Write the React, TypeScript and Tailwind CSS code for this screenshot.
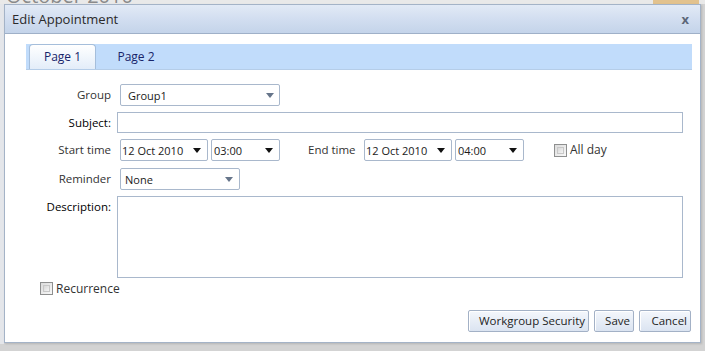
import React from "react";

const font = { fontFamily: '"Open Sans", "Noto Sans", sans-serif' };

function Arrow({ dark }: { dark?: boolean }) {
  return (
    <svg width="8" height="5" viewBox="0 0 8 5" className="shrink-0">
      <path d="M0 0 H8 L4 5 Z" fill={dark ? "#111" : "#66758a"} />
    </svg>
  );
}

function Select({
  value,
  width,
  dark,
  padLeft,
  arrowRight,
}: {
  value: string;
  width: string;
  dark?: boolean;
  padLeft: string;
  arrowRight: string;
}) {
  return (
    <div
      className={`${width} h-[22px] flex items-center justify-between border border-[#a9b8cc] rounded-[2px] bg-white text-[11px] text-[#1a1a1a] ${padLeft} ${arrowRight}`}
    >
      <span className="leading-none">{value}</span>
      <Arrow dark={dark} />
    </div>
  );
}

function Checkbox() {
  return (
    <div className="w-[13px] h-[13px] shrink-0 border border-[#8e8f8f] bg-gradient-to-br from-[#dcdcdc] to-[#f8f8f8] p-[2px]">
      <div className="w-full h-full border border-[#c8c8c8] bg-gradient-to-br from-[#d8d8d8] to-[#f4f4f4]" />
    </div>
  );
}

function Button({ children, width }: { children: React.ReactNode; width: string }) {
  return (
    <div
      className={`${width} h-[22px] flex items-center justify-end pr-[3px] border border-[#a3b1c6] rounded-[2px] bg-gradient-to-b from-[#f4f7fc] to-[#dbe4f1] text-[11.5px] text-[#1e1e1e] shadow-[inset_1px_1px_0_#ffffff]`}
    >
      {children}
    </div>
  );
}

export default function App() {
  return (
    <div
      className="relative w-[705px] h-[351px] overflow-hidden bg-[#d3d3d3] pt-[4px] pl-[4px]"
      style={font}
    >
      {/* calendar behind the dialog */}
      <div className="absolute left-0 top-0 w-[705px] h-[4px] bg-[#e9e9e9]" />
      <span className="absolute left-[6px] top-[-14px] text-[20px] text-[#8a8a8a] leading-none">
        October 2010
      </span>
      <div className="absolute right-[6px] top-0 w-[46px] h-[4px] bg-[#e2c28e]" />
      <div className="absolute left-0 top-[4px] w-[4px] h-[340px] bg-[#e4e6ea]" />

      <div className="relative w-[697px] h-[339px] border border-[#a4b3c7] bg-white flex flex-col shadow-[1px_1px_2px_rgba(0,0,0,0.15)]">
        {/* title bar */}
        <div className="h-[29px] shrink-0 flex items-center justify-between pl-[7px] pr-[11px] border-b border-[#9fb0c8] bg-gradient-to-b from-[#e2eaf6] via-[#d2def0] to-[#c4d4ea]">
          <span className="text-[13px] text-[#2a2a2a] leading-none">Edit Appointment</span>
          <span className="text-[13px] font-bold text-[#5d6778] leading-none">x</span>
        </div>

        {/* tabs */}
        <div className="mt-[10px] ml-[21px] mr-[8px] h-[26px] flex items-end pl-[3px] bg-[#c1dcfb] border-b border-[#b5cde8]">
          <div className="w-[67px] h-[25px] flex items-center justify-center rounded-t-[4px] border border-b-0 border-[#a5bedb] bg-gradient-to-b from-[#ffffff] to-[#e3edf9] text-[12px] text-[#17246a]">
            Page 1
          </div>
          <div className="w-[80px] h-[25px] flex items-center justify-center text-[12px] text-[#17246a]">
            Page 2
          </div>
        </div>

        {/* form */}
        <div className="flex flex-col text-[11.5px] text-[#333] leading-none">
          <div className="mt-[14px] h-[22px] flex items-center">
            <div className="w-[106px] text-right">Group</div>
            <div className="ml-[9px]">
              <Select value="Group1" width="w-[160px]" padLeft="pl-[7px]" arrowRight="pr-[5px]" />
            </div>
          </div>

          <div className="mt-[6px] h-[21px] flex items-center">
            <div className="w-[106px] text-right text-black font-medium">Subject:</div>
            <div className="ml-[6px] w-[566px] h-[21px] border border-[#a9b8cc] bg-white" />
          </div>

          <div className="mt-[6px] h-[22px] flex items-center">
            <div className="w-[106px] text-right">Start time</div>
            <div className="ml-[9px] flex gap-[3px]">
              <Select value="12 Oct 2010" width="w-[88px]" dark padLeft="pl-[1px]" arrowRight="pr-[6px]" />
              <Select value="03:00" width="w-[69px]" dark padLeft="pl-[2px]" arrowRight="pr-[6px]" />
            </div>
            <div className="ml-[28px] w-[56px]">End time</div>
            <div className="flex gap-[3px]">
              <Select value="12 Oct 2010" width="w-[88px]" dark padLeft="pl-[1px]" arrowRight="pr-[6px]" />
              <Select value="04:00" width="w-[69px]" dark padLeft="pl-[2px]" arrowRight="pr-[6px]" />
            </div>
            <div className="ml-[30px] flex items-center gap-[3px]">
              <Checkbox />
              <span className="text-[12px]">All day</span>
            </div>
          </div>

          <div className="mt-[7px] h-[22px] flex items-center">
            <div className="w-[106px] text-right">Reminder</div>
            <div className="ml-[9px]">
              <Select value="None" width="w-[120px]" padLeft="pl-[4px]" arrowRight="pr-[6px]" />
            </div>
          </div>

          <div className="mt-[6px] h-[82px] flex items-start">
            <div className="w-[106px] text-right text-black font-medium mt-[5px]">Description:</div>
            <div className="ml-[6px] w-[566px] h-[82px] border border-[#a9b8cc] bg-white" />
          </div>

          <div className="mt-[4px] ml-[35px] h-[13px] flex items-center gap-[3px]">
            <Checkbox />
            <span className="text-[12px]">Recurrence</span>
          </div>

          <div className="mt-[15px] pr-[9px] flex justify-end gap-[5px]">
            <Button width="w-[121px]">Workgroup Security</Button>
            <Button width="w-[40px]">Save</Button>
            <Button width="w-[52px]">Cancel</Button>
          </div>
        </div>
      </div>
    </div>
  );
}
